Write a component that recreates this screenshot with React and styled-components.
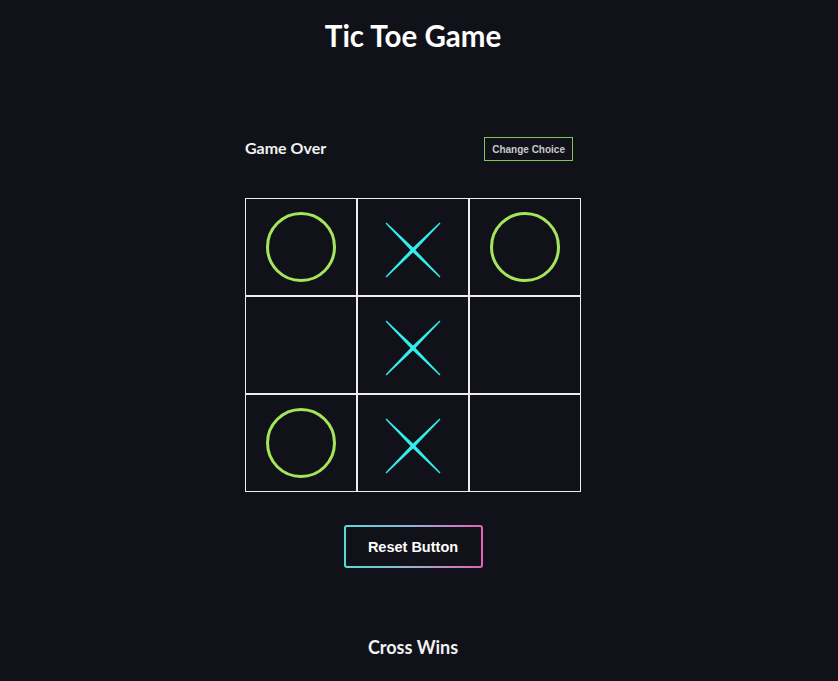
import React, { useState } from 'react';
import styled, { createGlobalStyle } from 'styled-components';

const GlobalStyle = createGlobalStyle`
  body {
    margin: 0;
    background-color: #111219;
    color: #ffffff;
    font-family: Lato, "Noto Sans", sans-serif;
  }
`;

const Page = styled.div`
  display: flex;
  flex-direction: column;
  align-items: center;
  padding-right: 12px;
  min-height: 681px;
  box-sizing: border-box;
`;

const Title = styled.h1`
  margin: 0;
  padding-top: 18px;
  font-size: 29.5px;
  line-height: 36px;
  font-weight: 700;
  color: #ffffff;
`;

const Board = styled.div`
  display: flex;
  flex-direction: column;
  width: 336px;
  margin-top: 83px;
`;

const StatusRow = styled.div`
  display: flex;
  justify-content: space-between;
  align-items: center;
  height: 24px;
  padding-right: 8px;
`;

const Status = styled.span`
  font-size: 16px;
  line-height: 22px;
  font-weight: 700;
  color: #f2f2f2;
  margin-top: -2px;
`;

const ChoiceButton = styled.button`
  height: 24px;
  padding: 0 7px;
  background: transparent;
  border: 1px solid #86c25a;
  color: #c9c9c9;
  font-family: "Liberation Sans", Arial, sans-serif;
  font-size: 10px;
  font-weight: 700;
  cursor: pointer;
`;

const Grid = styled.div`
  display: grid;
  grid-template-columns: repeat(3, 112px);
  grid-template-rows: repeat(3, 98px);
  margin-top: 37px;
`;

const Cell = styled.div`
  display: flex;
  align-items: center;
  justify-content: center;
  border: 1px solid #ededed;
  box-sizing: border-box;
`;

const ResetButton = styled.button`
  margin-top: 33px;
  width: 139px;
  height: 43px;
  border: 2px solid transparent;
  border-radius: 3px;
  background:
    linear-gradient(#111219, #111219) padding-box,
    linear-gradient(90deg, #55dcd6, #9ab0d6 50%, #e462b2) border-box;
  color: #ffffff;
  font-family: "Liberation Sans", Arial, sans-serif;
  font-size: 14.5px;
  font-weight: 700;
  cursor: pointer;
`;

const Winner = styled.p`
  margin: 68px 0 0;
  font-size: 18px;
  line-height: 22px;
  font-weight: 700;
  color: #f2f2f2;
`;

const Circle = () => (
  <svg width="72" height="72" viewBox="0 0 72 72">
    <circle cx="36" cy="36" r="33.5" fill="none" stroke="#a5e55a" strokeWidth="3" />
  </svg>
);

const Cross = () => (
  <svg width="56" height="56" viewBox="0 0 56 56" style={{ marginTop: 6 }}>
    <polygon
      points="1.42,0.58 29.27,26.73 55.42,54.58 54.58,55.42 26.73,29.27 0.58,1.42"
      fill="#34eeee"
    />
    <polygon
      points="55.42,1.42 29.27,29.27 1.42,55.42 0.58,54.58 26.73,26.73 54.58,0.58"
      fill="#34eeee"
    />
  </svg>
);

const initialCells = ['o', 'x', 'o', '', 'x', '', 'o', 'x', ''];

const App = () => {
  const [cells, setCells] = useState(initialCells);

  return (
    <Page>
      <GlobalStyle />
      <Title>Tic Toe Game</Title>
      <Board>
        <StatusRow>
          <Status>Game Over</Status>
          <ChoiceButton>Change Choice</ChoiceButton>
        </StatusRow>
        <Grid>
          {cells.map((c, i) => (
            <Cell key={i}>
              {c === 'o' && <Circle />}
              {c === 'x' && <Cross />}
            </Cell>
          ))}
        </Grid>
      </Board>
      <ResetButton onClick={() => setCells(Array(9).fill(''))}>Reset Button</ResetButton>
      <Winner>Cross Wins</Winner>
    </Page>
  );
};

export default App;
